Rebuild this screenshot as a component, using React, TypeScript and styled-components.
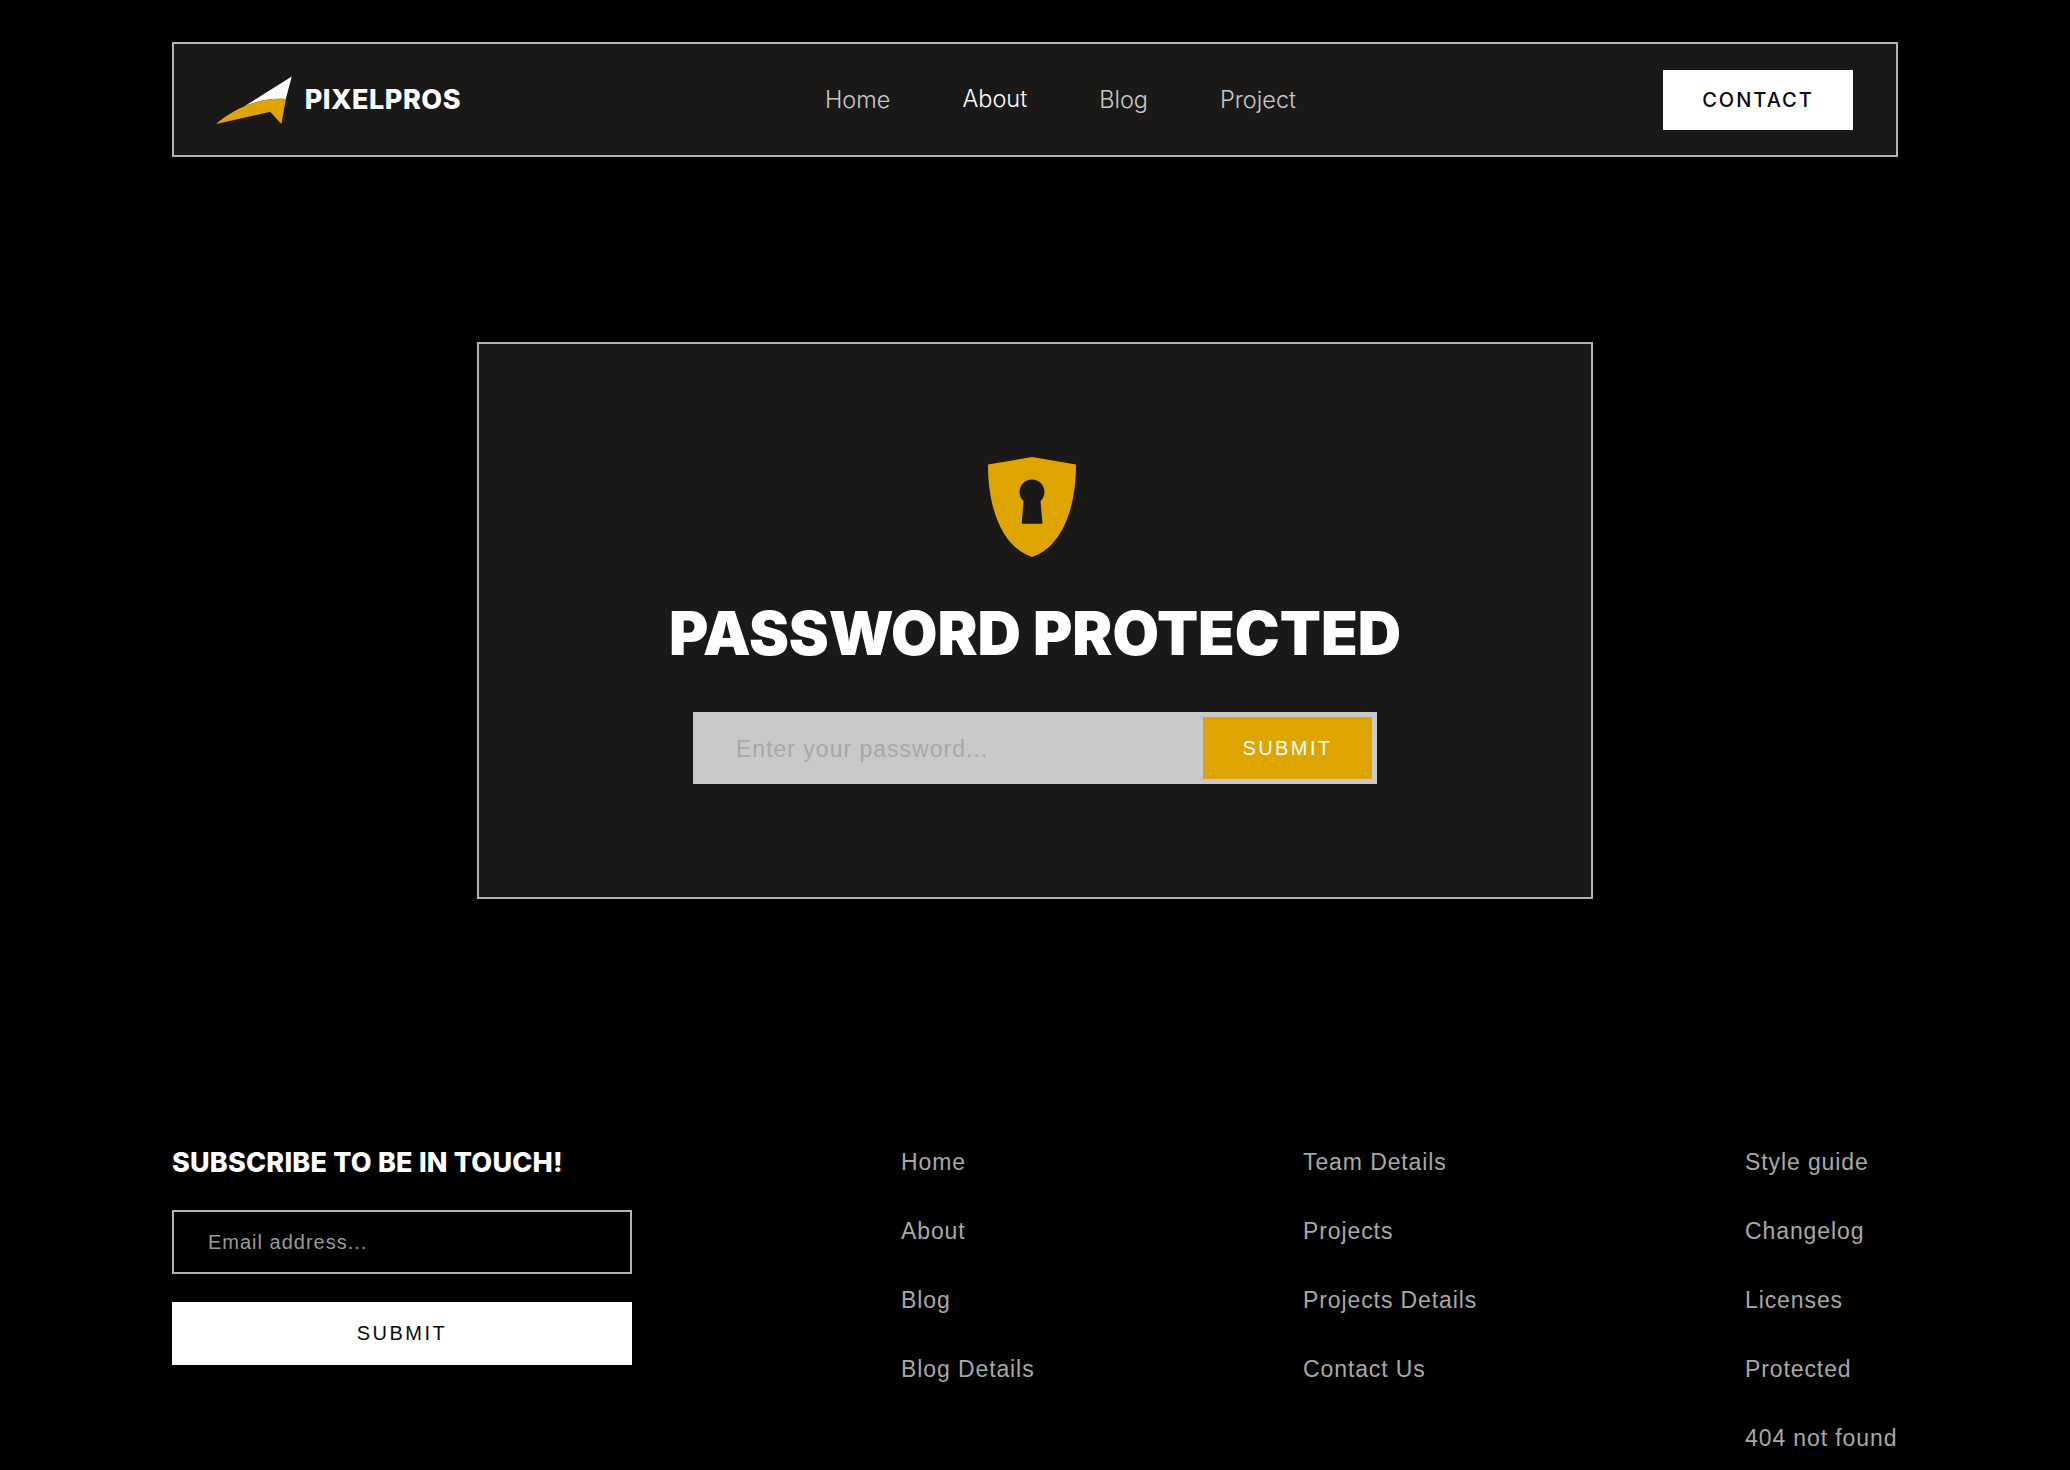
import { FC } from 'react';
import styled, { createGlobalStyle } from 'styled-components';

const GlobalStyle = createGlobalStyle`
  html, body {
    margin: 0;
    padding: 0;
    background: #000000;
  }
  * {
    box-sizing: border-box;
  }
`;

const footerColumns = [
  { width: '402px', links: ['Home', 'About', 'Blog', 'Blog Details'] },
  { width: '442px', links: ['Team Details', 'Projects', 'Projects Details', 'Contact Us'] },
  { width: '153px', links: ['Style guide', 'Changelog', 'Licenses', 'Protected', '404 not found'] },
];

const navLinks = ['Home', 'About', 'Blog', 'Project'];

const LogoMark: FC = () => (
  <svg width="78" height="50" viewBox="0 0 78 50">
    <path d="M0 49.5 L77 1 L71 24 C42 22 18 35 0 49.5 Z" fill="#ffffff" />
    <path d="M0 49.5 C18 35 42 22 71 24 L66.5 49.5 L55 37 Z" fill="#dea500" />
  </svg>
);

const ShieldIcon: FC = () => (
  <svg width="90" height="100" viewBox="0 0 90 100">
    <path
      fillRule="evenodd"
      fill="#dea500"
      d="M45 0 L89 7.5 C89 60 70 92 45 100 C20 92 1 60 1 7.5 Z M36.5 44.2 A12.5 12.5 0 1 1 53.5 44.2 L55.5 66.7 H34.7 Z"
    />
  </svg>
);

const App: FC = () => (
  <Page>
    <GlobalStyle />
    <Header>
      <Brand>
        <LogoMark />
        <BrandName>PIXELPROS</BrandName>
      </Brand>
      <Nav>
        {navLinks.map((link) => (
          <NavLink key={link} $active={link === 'About'}>
            {link}
          </NavLink>
        ))}
      </Nav>
      <ContactButton>CONTACT</ContactButton>
    </Header>
    <Main>
      <Card>
        <ShieldBox>
          <ShieldIcon />
        </ShieldBox>
        <Title>PASSWORD PROTECTED</Title>
        <PasswordForm>
          <PasswordInput placeholder="Enter your password..." />
          <PasswordSubmit>SUBMIT</PasswordSubmit>
        </PasswordForm>
      </Card>
    </Main>
    <Footer>
      <Subscribe>
        <SubscribeTitle>SUBSCRIBE TO BE IN TOUCH!</SubscribeTitle>
        <EmailInput placeholder="Email address..." />
        <SubscribeButton>SUBMIT</SubscribeButton>
      </Subscribe>
      <FooterLinks>
        {footerColumns.map((column) => (
          <FooterColumn key={column.links[0]} $width={column.width}>
            {column.links.map((link) => (
              <FooterLink key={link}>{link}</FooterLink>
            ))}
          </FooterColumn>
        ))}
      </FooterLinks>
    </Footer>
  </Page>
);

const Page = styled.div`
  width: 1726px;
  height: 1470px;
  margin: 0 auto;
  padding-top: 42px;
  overflow: hidden;
`;

const Header = styled.header`
  height: 115px;
  display: flex;
  align-items: center;
  justify-content: space-between;
  padding: 0 43px;
  background: #1a1917;
  border: 2px solid #b3b3b3;
`;

const Brand = styled.div`
  display: flex;
  align-items: center;
  gap: 12px;
  width: 245px;
  margin-left: -1px;
`;

const BrandName = styled.span`
  color: #ffffff;
  font-family: Inter, sans-serif;
  font-size: 27px;
  font-weight: 800;
  letter-spacing: 0.5px;
`;

const Nav = styled.nav`
  display: flex;
  gap: 72px;
  margin-left: -3px;
`;

const NavLink = styled.a<{ $active?: boolean }>`
  color: ${(props) => (props.$active ? '#ffffff' : '#c8c8c8')};
  font-family: Inter, sans-serif;
  font-size: 23.5px;
  font-weight: 300;
  position: relative;
  top: ${(props) => (props.$active ? '-1px' : '0')};
`;

const ContactButton = styled.button`
  width: 190px;
  height: 60px;
  border: none;
  background: #ffffff;
  color: #0a0a0a;
  font-family: Inter, sans-serif;
  font-size: 20px;
  font-weight: 500;
  letter-spacing: 2px;
`;

const Main = styled.main`
  display: flex;
  justify-content: center;
  padding-top: 185px;
`;

const Card = styled.section`
  width: 1116px;
  height: 557px;
  display: flex;
  flex-direction: column;
  align-items: center;
  padding-top: 113px;
  background: #1a1917;
  border: 2px solid #b3b3b3;
`;

const ShieldBox = styled.div`
  height: 100px;
  margin-left: -6px;
`;

const Title = styled.h1`
  margin: 43px 0 0;
  color: #ffffff;
  font-family: Inter, sans-serif;
  font-size: 60px;
  font-weight: 900;
  line-height: 66px;
  letter-spacing: 0;
  white-space: nowrap;
`;

const PasswordForm = styled.form`
  width: 684px;
  height: 72px;
  margin-top: 46px;
  padding: 5px;
  display: flex;
  background: #c9c9c9;
`;

const PasswordInput = styled.input`
  flex: 1;
  min-width: 0;
  padding: 2px 0 0 38px;
  border: none;
  outline: none;
  background: transparent;
  font-family: 'Liberation Sans', sans-serif;
  font-size: 23px;
  letter-spacing: 1px;
  &::placeholder {
    color: #a8a8a4;
    opacity: 1;
  }
`;

const PasswordSubmit = styled.button`
  width: 169px;
  border: none;
  background: #dea500;
  color: #ffffff;
  font-family: 'Liberation Sans', sans-serif;
  font-size: 20px;
  letter-spacing: 2.4px;
`;

const Footer = styled.footer`
  display: flex;
  justify-content: space-between;
  padding-top: 244px;
`;

const Subscribe = styled.div`
  width: 460px;
`;

const SubscribeTitle = styled.h2`
  margin: 1px 0 0;
  color: #ffffff;
  font-family: Inter, sans-serif;
  font-size: 27px;
  font-weight: 800;
  line-height: 38px;
  letter-spacing: 0.2px;
  white-space: nowrap;
`;

const EmailInput = styled.input`
  display: block;
  width: 100%;
  height: 64px;
  margin-top: 28px;
  padding: 0 34px;
  border: 2px solid #b3b3b3;
  outline: none;
  background: #000000;
  font-family: 'Liberation Sans', sans-serif;
  font-size: 20px;
  letter-spacing: 1px;
  &::placeholder {
    color: #9a9a9a;
    opacity: 1;
  }
`;

const SubscribeButton = styled.button`
  display: block;
  width: 100%;
  height: 63px;
  margin-top: 28px;
  border: none;
  background: #ffffff;
  color: #0a0a0a;
  font-family: 'Liberation Sans', sans-serif;
  font-size: 20px;
  letter-spacing: 2.5px;
`;

const FooterLinks = styled.div`
  display: flex;
`;

const FooterColumn = styled.div<{ $width: string }>`
  width: ${(props) => props.$width};
  display: flex;
  flex-direction: column;
  gap: 31px;
`;

const FooterLink = styled.a`
  color: #a8a8a8;
  font-family: 'Liberation Sans', sans-serif;
  font-size: 23px;
  line-height: 38px;
  letter-spacing: 0.9px;
  white-space: nowrap;
`;

export default App;
